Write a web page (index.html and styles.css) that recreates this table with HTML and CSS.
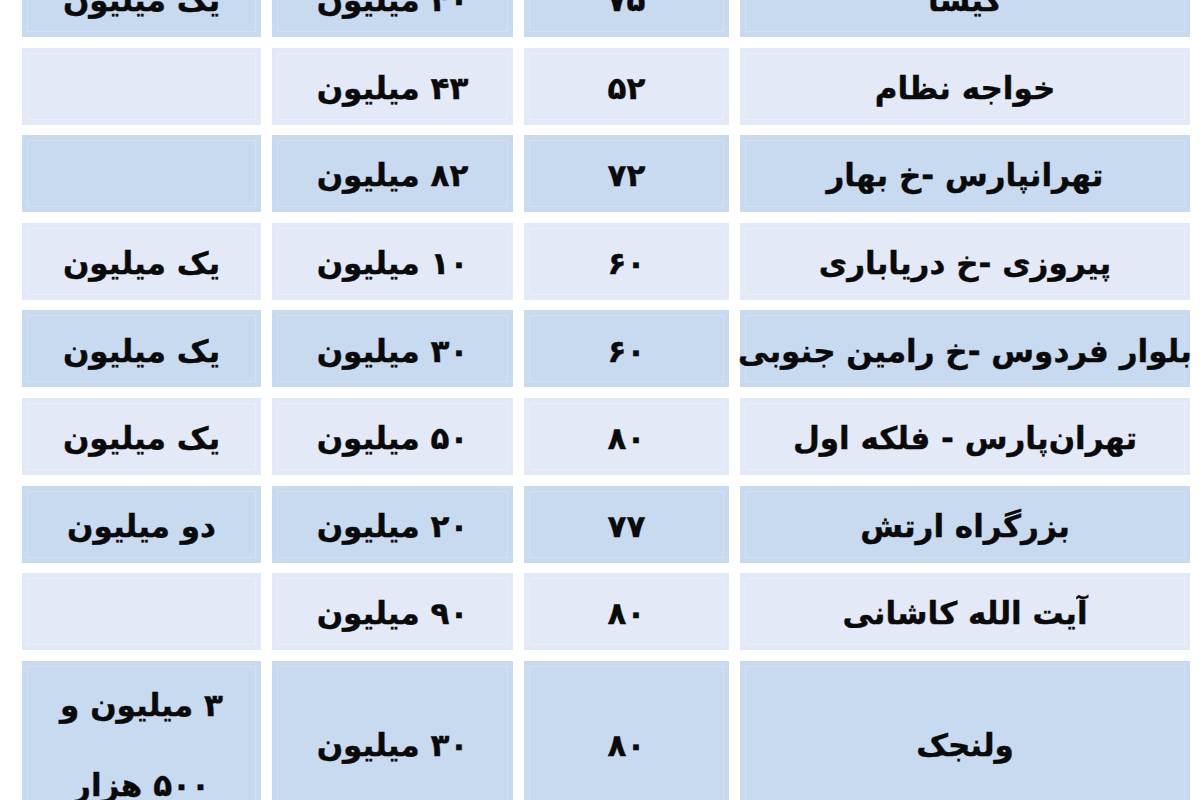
FILE: index.html
```html
<!DOCTYPE html>
<html lang="fa" dir="rtl">
<head>
<meta charset="utf-8">
<title>جدول</title>
<link rel="stylesheet" href="styles.css">
</head>
<body>
<div class="table">
  <div class="cell dark">گیشا</div>
  <div class="cell dark">۷۵</div>
  <div class="cell dark">۴۰ میلیون</div>
  <div class="cell dark">یک میلیون</div>

  <div class="cell light">خواجه نظام</div>
  <div class="cell light">۵۲</div>
  <div class="cell light">۴۳ میلیون</div>
  <div class="cell light"></div>

  <div class="cell dark">تهرانپارس -خ بهار</div>
  <div class="cell dark">۷۲</div>
  <div class="cell dark">۸۲ میلیون</div>
  <div class="cell dark"></div>

  <div class="cell light">پیروزی -خ دریاباری</div>
  <div class="cell light">۶۰</div>
  <div class="cell light">۱۰ میلیون</div>
  <div class="cell light">یک میلیون</div>

  <div class="cell dark">بلوار فردوس -خ رامین جنوبی</div>
  <div class="cell dark">۶۰</div>
  <div class="cell dark">۳۰ میلیون</div>
  <div class="cell dark">یک میلیون</div>

  <div class="cell light">تهران‌پارس - فلکه اول</div>
  <div class="cell light">۸۰</div>
  <div class="cell light">۵۰ میلیون</div>
  <div class="cell light">یک میلیون</div>

  <div class="cell dark">بزرگراه ارتش</div>
  <div class="cell dark">۷۷</div>
  <div class="cell dark">۲۰ میلیون</div>
  <div class="cell dark">دو میلیون</div>

  <div class="cell light">آیت الله کاشانی</div>
  <div class="cell light">۸۰</div>
  <div class="cell light">۹۰ میلیون</div>
  <div class="cell light"></div>

  <div class="cell dark tall">ولنجک</div>
  <div class="cell dark tall">۸۰</div>
  <div class="cell dark tall">۳۰ میلیون</div>
  <div class="cell dark tall multi">۳ میلیون و<br>۵۰۰ هزار</div>
</div>
</body>
</html>
```

FILE: styles.css
```css
html, body {
  margin: 0;
  padding: 0;
  background: #ffffff;
  overflow: hidden;
}

.table {
  direction: rtl;
  display: grid;
  grid-template-columns: 450px 205px 241px 239px;
  grid-auto-rows: 77px;
  column-gap: 11px;
  row-gap: 10.6px;
  width: 1168px;
  margin: -40px 10px 0 22px;
  font-family: "DejaVu Sans", sans-serif;
  font-weight: bold;
  font-size: 31px;
  color: #0a0a0a;
}

.cell {
  display: flex;
  align-items: center;
  justify-content: center;
  text-align: center;
  white-space: nowrap;
  line-height: 1.4;
  padding-top: 5px;
  box-sizing: border-box;
  -webkit-text-stroke: 0.4px #0a0a0a;
}

.dark {
  background: #c7daf0;
  box-shadow: inset 0 0 0 5px #c7daf0, inset 0 0 0 6px #d2e2f3;
}

.light {
  background: #e3e9f6;
  box-shadow: inset 0 0 0 5px #e3e9f6, inset 0 0 0 6px #eaeff8;
}

.tall {
  grid-row: span 2;
}

.multi {
  line-height: 80px;
  align-items: flex-start;
  padding-top: 4px;
}
```
